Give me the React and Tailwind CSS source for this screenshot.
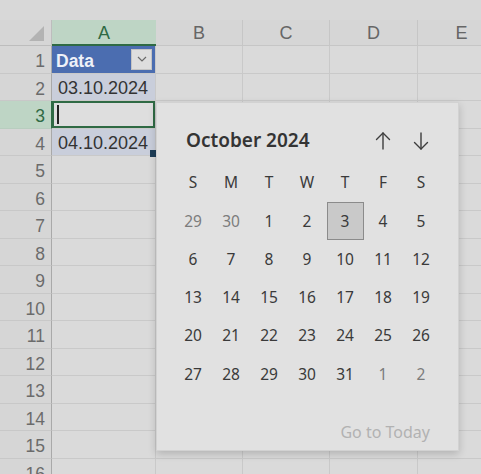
import React from 'react';

const columns = [
  { label: 'A', width: 'w-[104px]', active: true },
  { label: 'B', width: 'w-[87px]' },
  { label: 'C', width: 'w-[87px]' },
  { label: 'D', width: 'w-[88px]' },
  { label: 'E', width: 'w-[88px]' },
];

const rows = Array.from({ length: 16 }, (_, i) => i + 1);

const weekDays = ['S', 'M', 'T', 'W', 'T', 'F', 'S'];

// october 2024 view, with the trailing days of the neighbour months
const days = [
  [29, 30, 1, 2, 3, 4, 5],
  [6, 7, 8, 9, 10, 11, 12],
  [13, 14, 15, 16, 17, 18, 19],
  [20, 21, 22, 23, 24, 25, 26],
  [27, 28, 29, 30, 31, 1, 2],
];

function Arrow({ down }) {
  return (
    <svg width="18" height="20" viewBox="0 0 18 20" fill="none" stroke="#3d3d3d" strokeWidth="1.4" strokeLinecap="round" strokeLinejoin="round">
      {down ? (
        <>
          <path d="M9 2v16" />
          <path d="M2.5 11.5L9 18l6.5-6.5" />
        </>
      ) : (
        <>
          <path d="M9 18V2" />
          <path d="M2.5 8.5L9 2l6.5 6.5" />
        </>
      )}
    </svg>
  );
}

function Cell({ row, col }) {
  if (col !== 'A') return null;
  if (row === 1) {
    return (
      <div className="flex h-full items-center justify-between bg-[#4b6db0] pl-[4px] pr-[3px]">
        <span className="pt-[3px] text-[17.5px] font-bold text-[#eef1f8]">Data</span>
        <span className="flex h-[21px] w-[21px] items-center justify-center border border-[#c4c4c4] bg-[#dedede]">
          <svg width="10" height="6" viewBox="0 0 10 6" fill="none" stroke="#6a6a6a" strokeWidth="1.2">
            <path d="M1 1l4 4 4-4" />
          </svg>
        </span>
      </div>
    );
  }
  if (row === 2 || row === 4) {
    return (
      <div className="relative flex h-full items-center bg-[#c9cedb] pl-[6px] pt-[3px] text-[18px] text-[#333]">
        {row === 2 ? '03.10.2024' : '04.10.2024'}
        {row === 4 && <span className="absolute bottom-[-2px] right-[-2px] h-[7px] w-[7px] bg-[#1e3e58]" />}
      </div>
    );
  }
  if (row === 3) {
    return (
      <div className="flex h-full items-center border-2 border-[#2f6a44] bg-[#dedede] pl-[3px]">
        <span className="h-[19px] w-[1.5px] bg-[#222]" />
      </div>
    );
  }
  return null;
}

function Sheet() {
  return (
    <div className="flex flex-col font-['Liberation_Sans',Arial,sans-serif]">
      <div className="h-[20px]" />
      <div className="flex h-[26px]">
        <div className="relative w-[52px] shrink-0 border-b border-r border-[#bdbdbd] bg-[#d6d6d6]">
          <span className="absolute bottom-[4px] right-[7px] h-0 w-0 border-b-[15px] border-l-[15px] border-b-[#b3b3b3] border-l-transparent" />
        </div>
        {columns.map((c) => (
          <div
            key={c.label}
            className={`${c.width} shrink-0 flex items-center justify-center pt-[2px] text-[18px] ${
              c.active
                ? 'border-b-2 border-[#2f6a44] bg-[#bed5c5] text-[#2f6a44]'
                : 'border-b border-r border-[#c6c6c6] bg-[#d6d6d6] text-[#666]'
            }`}
          >
            {c.label}
          </div>
        ))}
      </div>
      {rows.map((r) => (
        <div key={r} className="flex h-[27.5px]">
          <div
            className={`w-[52px] shrink-0 flex items-center justify-end border-b border-r pr-[6px] pt-[4px] text-[17.5px] ${
              r === 3
                ? 'border-b-[#b8cdbf] border-r-[#2f6a44] bg-[#bed5c5] text-[#2f6a44]'
                : 'border-b-[#c8c8c8] border-r-[#a9a9a9] bg-[#d6d6d6] text-[#6b6b6b]'
            }`}
          >
            {r}
          </div>
          {columns.map((c) => (
            <div key={c.label} className={`${c.width} shrink-0 border-b border-r border-[#c9c9c9] bg-[#dadada]`}>
              {r <= 4 ? <Cell row={r} col={c.label} /> : null}
            </div>
          ))}
        </div>
      ))}
    </div>
  );
}

function DatePicker() {
  return (
    <div className="absolute left-[156px] top-[102px] flex h-[349px] w-[303px] flex-col border border-[#d2d2d2] bg-[#e1e1e1] font-['Noto_Sans',sans-serif] text-[#3a3a3a] shadow-[0_3px_8px_rgba(0,0,0,0.18)]">
      <div className="flex h-[61px] items-center pl-[17px] pr-[18px] pt-[14px]">
        <div className="flex-1 pl-[12px] text-[19px] font-semibold text-[#343434]">October 2024</div>
        <div className="flex w-[38px] justify-center"><Arrow /></div>
        <div className="flex w-[38px] justify-center"><Arrow down /></div>
      </div>
      <div className="grid grid-cols-7 px-[17px] pr-[18px] text-[15.5px]">
        {weekDays.map((d, i) => (
          <div key={i} className="flex h-[38px] items-center justify-center">{d}</div>
        ))}
        {days.map((week, w) =>
          week.map((d, i) => {
            const outside = (w === 0 && d > 20) || (w === 4 && d < 10);
            const selected = w === 0 && d === 3;
            return (
              <div key={`${w}-${i}`} className="flex h-[38.25px] items-center justify-center">
                <span
                  className={`flex h-[38px] w-[37px] items-center justify-center ${
                    selected ? 'border border-[#8b8b8b] bg-[#c9c9c9]' : ''
                  } ${outside ? 'text-[#7c7c7c]' : ''}`}
                >
                  {d}
                </span>
              </div>
            );
          })
        )}
      </div>
      <div className="flex flex-1 items-center justify-end pr-[28px] pt-[20px] text-[16px] text-[#b2b2b2]">Go to Today</div>
    </div>
  );
}

export default function App() {
  return (
    <div className="relative h-[474px] w-[481px] overflow-hidden bg-[#d8d8d8]">
      <Sheet />
      <DatePicker />
    </div>
  );
}
